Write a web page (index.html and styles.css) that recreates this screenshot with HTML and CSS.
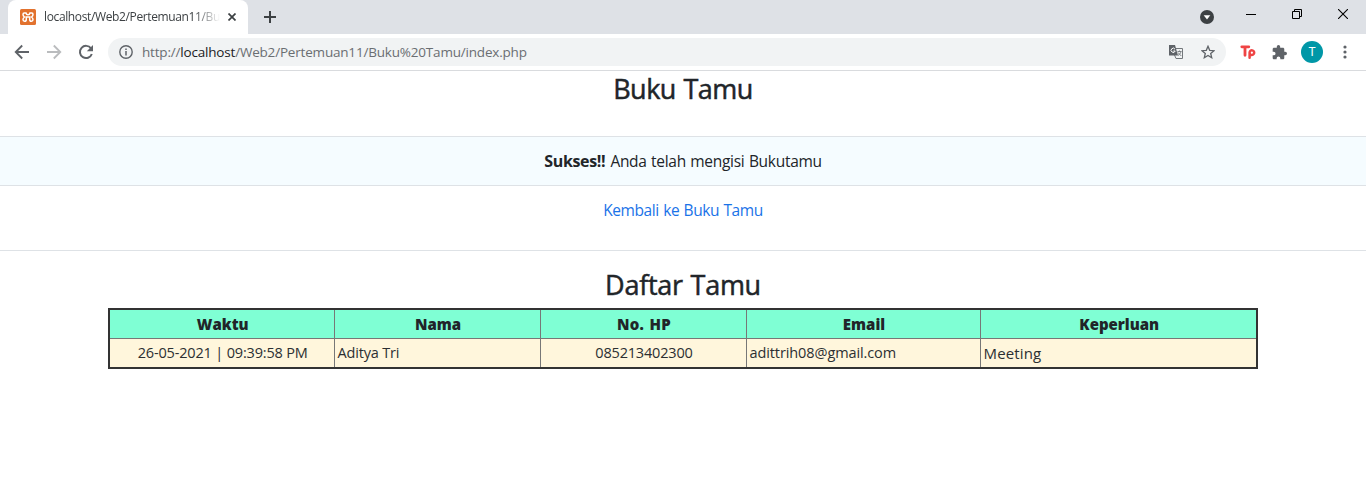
FILE: index.html
```html
<!DOCTYPE html>
<html lang="id">
<head>
<meta charset="utf-8">
<title>Buku Tamu</title>
<link rel="stylesheet" href="styles.css">
</head>
<body>
<header class="tabstrip">
  <div class="tab">
    <svg class="favicon" width="16" height="16" viewBox="0 0 16 16"><rect width="16" height="16" rx="1.500" fill="#e2722e"/><path d="M6 4H4.200C3.200 4 3 4.600 3 5.400C3 6.600 3.600 7.400 4.500 8C3.600 8.600 3 9.400 3 10.600C3 11.600 3.400 12.200 4.600 12.200C6 12.200 6.300 11.400 6.300 10.400V8H9.700V10.400C9.700 11.400 10 12.200 11.400 12.200C12.600 12.200 13 11.600 13 10.600C13 9.400 12.400 8.600 11.500 8C12.400 7.400 13 6.600 13 5.400C13 4.600 12.800 4 11.800 4H10C9.700 5.300 9 5.800 8 5.800S6.300 5.300 6 4Z" fill="none" stroke="#fff" stroke-width="1.500"/></svg>
    <span class="tab-title">localhost/Web2/Pertemuan11/Bu</span>
    <svg class="tab-close" width="8" height="8" viewBox="0 0 8 8"><path d="M.5.5l7 7M7.500.5l-7 7" stroke="#3c4043" stroke-width="1.700"/></svg>
  </div>
  <svg class="new-tab" width="12" height="12" viewBox="0 0 12 12"><path d="M6 0v12M0 6h12" stroke="#3c4043" stroke-width="2"/></svg>
  <div class="window-controls">
    <svg width="14" height="14" viewBox="0 0 14 14"><circle cx="7" cy="7" r="7" fill="#3c4043"/><path d="M3.700 5.200h6.600L7 9.600z" fill="#fff"/></svg>
    <svg class="control" width="10" height="10" viewBox="0 0 10 10"><path d="M0 5.500h10" stroke="#000"/></svg>
    <svg class="control" width="10" height="10" viewBox="0 0 10 10"><path d="M.5 2.500h7v7h-7zM2.500 2.500v-2h7v7h-2" fill="none" stroke="#000"/></svg>
    <svg class="control" width="10" height="10" viewBox="0 0 10 10"><path d="M0 0l10 10M10 0L0 10" stroke="#000" stroke-width="1.100"/></svg>
  </div>
</header>
<nav class="toolbar">
  <svg class="nav-icon" width="16" height="16" viewBox="0 0 16 16"><path d="M15 8H2M8.200 1.500L1.700 8l6.500 6.500" fill="none" stroke="#5f6368" stroke-width="1.800"/></svg>
  <svg class="nav-icon" width="16" height="16" viewBox="0 0 16 16"><path d="M1 8h13M7.800 1.500L14.300 8l-6.500 6.500" fill="none" stroke="#babcbe" stroke-width="1.800"/></svg>
  <svg class="nav-icon" width="16" height="16" viewBox="0 0 16 16"><path d="M13 4.400A6.100 6.100 0 1 0 13.800 10" fill="none" stroke="#5f6368" stroke-width="2"/><path d="M15 1v6.200H8.800z" fill="#5f6368"/></svg>
  <div class="omnibox">
    <svg width="14" height="14" viewBox="0 0 14 14"><circle cx="7" cy="7" r="6.200" fill="none" stroke="#5f6368" stroke-width="1.400"/><path d="M7 6v4.500M7 3.400v1.500" stroke="#5f6368" stroke-width="1.500"/></svg>
    <span class="url">http://<span class="host">localhost</span>/Web2/Pertemuan11/Buku%20Tamu/index.php</span>
    <svg class="translate" width="14" height="14" viewBox="0 0 14 14"><path d="M6 3.500h7.500v10H7L5.500 10" fill="#f1f3f4" stroke="#73777b"/><path d="M0 0h6l3 10.500H0z" fill="#5f6368"/><path d="M6 4.200A2.100 2.100 0 1 0 6.200 6H4.300" fill="none" stroke="#fff" stroke-width="1"/><path d="M8.500 6.500h4M10.500 5.500v1M12 6.500c-.5 2-1.500 3-3 4M9 7.500l3.300 3.500" fill="none" stroke="#73777b" stroke-width=".9"/></svg>
    <svg width="14" height="14" viewBox="0 0 14 14"><path d="M7 1.300l1.700 4 4.300.4-3.300 2.800 1 4.200L7 10.500l-3.700 2.200 1-4.200L1 5.700l4.300-.4z" fill="none" stroke="#5f6368" stroke-width="1.300"/></svg>
  </div>
  <svg class="ext-tp" width="16" height="16" viewBox="0 0 16 16"><path d="M1.800 2.800h7M5 2.800v8.500" fill="none" stroke="#ef4444" stroke-width="2.800" stroke-linecap="round"/><path d="M9.600 13.800V8.500a2.300 2.300 0 1 1 1.500 2.300" fill="none" stroke="#ef4444" stroke-width="2.500" stroke-linecap="round"/></svg>
  <svg class="ext-puzzle" width="15" height="15" viewBox="1 1 22 22"><path fill="#5f6368" d="M20.500 11H19V7c0-1.100-.9-2-2-2h-4V3.500a2.500 2.500 0 0 0-5 0V5H4c-1.100 0-2 .9-2 2v3.800h1.500a2.700 2.700 0 0 1 0 5.400H2V20c0 1.100.9 2 2 2h3.800v-1.500a2.700 2.700 0 0 1 5.400 0V22H17c1.100 0 2-.9 2-2v-4h1.500a2.500 2.500 0 0 0 0-5z"/></svg>
  <span class="avatar">T</span>
  <svg class="menu" width="4" height="14" viewBox="0 0 4 14"><g fill="#5f6368"><circle cx="2" cy="2" r="1.600"/><circle cx="2" cy="7" r="1.600"/><circle cx="2" cy="12" r="1.600"/></g></svg>
</nav>
<main>
  <h2 class="title">Buku Tamu</h2>
  <p class="notice"><b class="notice-strong">Sukses!!</b> <span class="notice-text">Anda telah mengisi Bukutamu</span></p>
  <p class="back"><a class="link">Kembali ke Buku Tamu</a></p>
  <h2 class="title list-title">Daftar Tamu</h2>
  <table class="guests">
    <colgroup><col class="c1"><col class="c2"><col class="c3"><col class="c4"><col class="c5"></colgroup>
    <tr><th>Waktu</th><th>Nama</th><th class="phone-head">No. HP</th><th>Email</th><th>Keperluan</th></tr>
    <tr><td class="center">26-05-2021 | 09:39:58 PM</td><td>Aditya Tri</td><td class="center">085213402300</td><td class="email">adittrih08@gmail.com</td><td class="purpose">Meeting</td></tr>
  </table>
</main>
</body>
</html>
```
FILE: styles.css
```css
* { box-sizing: border-box; }
body { margin: 0; background: #fff; color: #212529; font: 16px/24px "Open Sans", "Noto Sans", sans-serif; height: 503px; overflow: hidden; }
svg { display: block; flex: none; }
h2, p { margin: 0; }
.tabstrip { height: 34px; background: #dee1e6; display: flex; padding-left: 8px; }
.tab { width: 240px; background: #fff; border-radius: 8px 8px 0 0; display: flex; align-items: center; padding: 0 12px; }
.favicon { margin-right: 8px; }
.tab-title { width: 176px; white-space: nowrap; font-size: 12px; letter-spacing: -.37px; color: #3c4043; -webkit-mask-image: linear-gradient(90deg, #000 85%, transparent); mask-image: linear-gradient(90deg, #000 85%, transparent); }
.tab-close { margin-left: 8px; }
.new-tab { margin: 11px 0 0 16px; }
.window-controls { margin-left: auto; padding: 10px 18px 0 0; display: flex; }
.control { margin-left: 36px; }
.window-controls svg:nth-child(2) { margin-left: 32px; }
.window-controls svg:nth-child(n+2) { margin-top: -1px; }
.toolbar { height: 37px; border-bottom: 1px solid #d9dbde; display: flex; align-items: center; padding-left: 14px; }
.nav-icon { margin-right: 16px; }
.omnibox { width: 1118px; height: 28px; margin-left: -2px; border-radius: 14px; background: #f1f3f4; display: flex; align-items: center; padding: 0 11px; }
.url { margin-left: 9px; font-size: 13.5px; letter-spacing: -.19px; color: #6a6e72; white-space: nowrap; }
.host { color: #202124; }
.translate { margin-left: auto; margin-right: 18px; }
.ext-tp { margin-left: 14px; }
.ext-puzzle { margin-left: 16px; }
.avatar { width: 22px; height: 22px; margin-left: 14px; border-radius: 50%; background: #0097a7; color: #fff; font: 12px/22px Roboto, sans-serif; text-align: center; }
.menu { margin-left: 20px; }
.title { height: 65px; padding-top: 1px; text-align: center; font-size: 27px; line-height: 34px; font-weight: 500; letter-spacing: -.5px; word-spacing: 1px; -webkit-text-stroke: .5px #212529; }
.notice { height: 50px; border: solid #dee2e6; border-width: 1px 0; background: #f5fcff; text-align: center; padding-top: 12px; }
.notice-strong { letter-spacing: -.35px; }
.notice-text { font-size: 15.5px; letter-spacing: -.29px; word-spacing: .7px; margin-left: 1px; }
.back { height: 65px; border-bottom: 1px solid #dee2e6; padding-top: 12px; text-align: center; }
.link { color: #1a73e8; font-size: 15.5px; letter-spacing: -.4px; word-spacing: .7px; }
.list-title { height: 57px; padding-top: 17px; letter-spacing: -.27px; }
.guests { width: 1150px; margin: 0 auto; border: 2px solid #333; border-collapse: collapse; table-layout: fixed; font-size: 15px; }
.guests th, .guests td { height: 29px; padding: 0 1px 0 3px; border: 1px solid #777; line-height: 24px; white-space: nowrap; }
.guests th { background: #7fffd4; font-weight: 800; }
.guests .phone-head { letter-spacing: .3px; word-spacing: 1px; }
.guests td { height: 30px; padding-top: 0; background: #fff6dc; font-size: 14.5px; letter-spacing: -.17px; color: #2c2f32; }
.guests .center { text-align: center; }
.guests .email { letter-spacing: -.1px; }
.guests .purpose { font-size: 15px; letter-spacing: .15px; }
.c1 { width: 225px; } .c2 { width: 206px; } .c3 { width: 206px; } .c4 { width: 234px; }
```
